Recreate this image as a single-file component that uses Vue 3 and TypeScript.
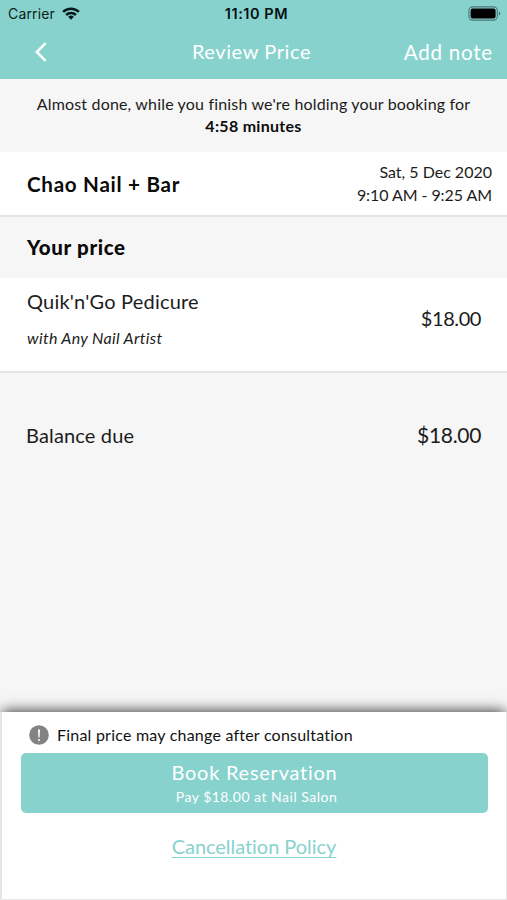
<script setup lang="ts">
interface Service {
  name: string
  artist: string
  price: string
}

const holdTime = '4:58 minutes'
const salon = 'Chao Nail + Bar'
const visit = { date: 'Sat, 5 Dec 2020', time: '9:10 AM - 9:25 AM' }
const services: Service[] = [
  { name: "Quik'n'Go Pedicure", artist: 'with Any Nail Artist', price: '$18.00' },
]
const balance = '$18.00'
</script>

<template>
  <div class="screen">
    <header class="top">
      <div class="status">
        <div class="network">
          <span class="carrier">Carrier</span>
          <svg class="wifi" viewBox="0 0 18 13" width="18" height="13">
            <g fill="none" stroke="#07191a" stroke-width="2.5">
              <path d="M1.1 4.9a11.2 11.2 0 0 1 15.8 0" />
              <path d="M4.1 8a7 7 0 0 1 9.8 0" />
            </g>
            <path d="M9 12.7 6.1 9.8a4.2 4.2 0 0 1 5.8 0Z" fill="#07191a" />
          </svg>
        </div>
        <span class="clock">11:10 PM</span>
        <svg class="battery" viewBox="0 0 33 15" width="33" height="15">
          <rect x="0.9" y="0.9" width="28.4" height="13.2" rx="3.8" fill="none" stroke="#4b7775" stroke-width="1.1" />
          <rect x="2.6" y="2.6" width="25" height="9.8" rx="2.2" fill="#000" />
          <path d="M30.8 5.4q1.5.6 1.5 2.1t-1.5 2.1Z" fill="#4b7775" />
        </svg>
      </div>
      <nav class="nav">
        <button class="back" aria-label="Back">
          <svg viewBox="0 0 14 22" width="14" height="22">
            <path d="M11.6 2.2 2.8 11l8.8 8.8" fill="none" stroke="#fff" stroke-width="2.5" />
          </svg>
        </button>
        <h1 class="title">Review Price</h1>
        <button class="note">Add note</button>
      </nav>
    </header>

    <section class="hold">
      <p>Almost done, while you finish we're holding your booking for</p>
      <p class="countdown">{{ holdTime }}</p>
    </section>

    <section class="venue">
      <h2 class="salon">{{ salon }}</h2>
      <div class="visit">
        <p class="date">{{ visit.date }}</p>
        <p class="time">{{ visit.time }}</p>
      </div>
    </section>

    <h2 class="section-title">Your price</h2>

    <section v-for="service in services" :key="service.name" class="service">
      <div>
        <p class="service-name">{{ service.name }}</p>
        <p class="artist">{{ service.artist }}</p>
      </div>
      <span class="price">{{ service.price }}</span>
    </section>

    <section class="balance">
      <span class="balance-label">Balance due</span>
      <span class="balance-price">{{ balance }}</span>
    </section>

    <footer class="sheet">
      <div class="notice">
        <svg viewBox="0 0 20 20" width="20" height="20">
          <circle cx="10" cy="10" r="9.8" fill="#838383" />
          <path d="M9 4.4h2l-.4 8H9.4Z" fill="#fff" />
          <circle cx="10" cy="14.9" r="1" fill="#fff" />
        </svg>
        <span>Final price may change after consultation</span>
      </div>
      <button class="book">
        <span class="book-label">Book Reservation</span>
        <span class="book-detail">Pay {{ balance }} at Nail Salon</span>
      </button>
      <a class="policy">Cancellation Policy</a>
    </footer>
  </div>
</template>

<style>
body {
  background: #f6f6f6;
}
</style>

<style scoped>
.screen {
  display: flex;
  flex-direction: column;
  height: 900px;
  overflow: hidden;
  background: #f6f6f6;
  color: #1c1c1c;
  font: 16px/22px Lato, sans-serif;
}
p,
h1,
h2 {
  margin: 0;
}
button {
  border: 0;
  padding: 0;
  margin: 0;
  background: none;
  color: #fff;
  font: inherit;
}
svg {
  display: block;
}

.top {
  height: 79px;
  background: #88d2ce;
}
.status {
  display: grid;
  grid-template-columns: 1fr auto 1fr;
  align-items: center;
  height: 27px;
  padding: 0 6px 0 8px;
  font: 14px/27px Inter, sans-serif;
  color: #0b1f20;
}
.network {
  display: flex;
  align-items: center;
  gap: 7px;
}
.carrier {
  letter-spacing: 0.15px;
}
.clock {
  padding-left: 4px;
  font-size: 14.5px;
  font-weight: 600;
  letter-spacing: 0.55px;
  color: #051112;
}
.battery {
  justify-self: end;
}
.nav {
  display: grid;
  grid-template-columns: 1fr auto 1fr;
  align-items: center;
  height: 49px;
  padding: 0 15px 0 34px;
  font-size: 20px;
  line-height: 24px;
}
.back {
  justify-self: start;
}
.title {
  margin-right: 38px;
  margin-left: 15px;
  padding-bottom: 2px;
  font-size: 20px;
  font-weight: 400;
  letter-spacing: 0.6px;
  color: #fff;
}
.note {
  justify-self: end;
  margin-right: -1px;
  font-size: 20.6px;
  letter-spacing: 0.75px;
}

.hold {
  height: 59px;
  padding-top: 14px;
  text-align: center;
  letter-spacing: 0.17px;
}
.countdown {
  font-weight: 700;
  letter-spacing: 0.29px;
  color: #0c0c0c;
}

.venue {
  display: flex;
  justify-content: space-between;
  height: 63px;
  padding: 0 15px 0 27px;
  background: #fff;
  border-bottom: 2px solid #e4e4e4;
}
.salon {
  font-size: 20.6px;
  line-height: 65px;
  letter-spacing: 0.71px;
  color: #0a0a0a;
}
.visit {
  padding-top: 8px;
  line-height: 23px;
  text-align: right;
}
.time {
  letter-spacing: -0.07px;
}

.section-title {
  height: 61px;
  padding-left: 27px;
  font-size: 20.5px;
  font-weight: 900;
  line-height: 61px;
  letter-spacing: 0.65px;
  color: #0a0a0a;
}

.service {
  display: flex;
  justify-content: space-between;
  height: 93px;
  padding: 0 26px 0 27px;
  background: #fff;
  border-bottom: 2px solid #e4e4e4;
}
.service-name {
  padding-top: 11px;
  font-size: 20px;
  line-height: 24px;
  letter-spacing: 0.2px;
}
.artist {
  padding-top: 14px;
  font-style: italic;
  letter-spacing: 0.33px;
}
.price {
  font-size: 20px;
  line-height: 80px;
  letter-spacing: -0.42px;
}

.balance {
  display: flex;
  justify-content: space-between;
  height: 124px;
  padding: 0 26px;
  font-size: 20px;
  line-height: 124px;
}
.balance-label {
  letter-spacing: 0.15px;
}
.balance-price {
  font-size: 21px;
  letter-spacing: -0.33px;
}

.sheet {
  display: flex;
  flex-direction: column;
  box-sizing: border-box;
  height: 188px;
  margin-top: auto;
  border: solid #e6e6e6;
  border-width: 0 1px 1px 2px;
  background: #fff;
  box-shadow: 0 -3px 13px -2px rgba(0, 0, 0, 0.78);
  clip-path: inset(-24px 0 0 0);
}
.notice {
  display: flex;
  align-items: center;
  gap: 8px;
  box-sizing: border-box;
  height: 41px;
  padding: 4px 27px 0;
  letter-spacing: 0.22px;
  color: #111;
}
.book {
  display: flex;
  flex-direction: column;
  align-items: center;
  height: 60px;
  margin: 0 18px 0 19px;
  padding-top: 7px;
  border-radius: 5px;
  background: #88d2ce;
}
.book-label {
  font-size: 20px;
  line-height: 24px;
  letter-spacing: 0.75px;
}
.book-detail {
  padding-top: 1px;
  margin-left: 4px;
  font-size: 14px;
  line-height: 24px;
  letter-spacing: 0.5px;
}
.policy {
  align-self: center;
  margin-top: 21px;
  font-size: 20px;
  line-height: 24px;
  letter-spacing: -0.04px;
  color: #88d2ce;
  text-decoration: underline;
  text-decoration-thickness: 1px;
  text-underline-offset: 3px;
  text-decoration-skip-ink: none;
}
</style>
